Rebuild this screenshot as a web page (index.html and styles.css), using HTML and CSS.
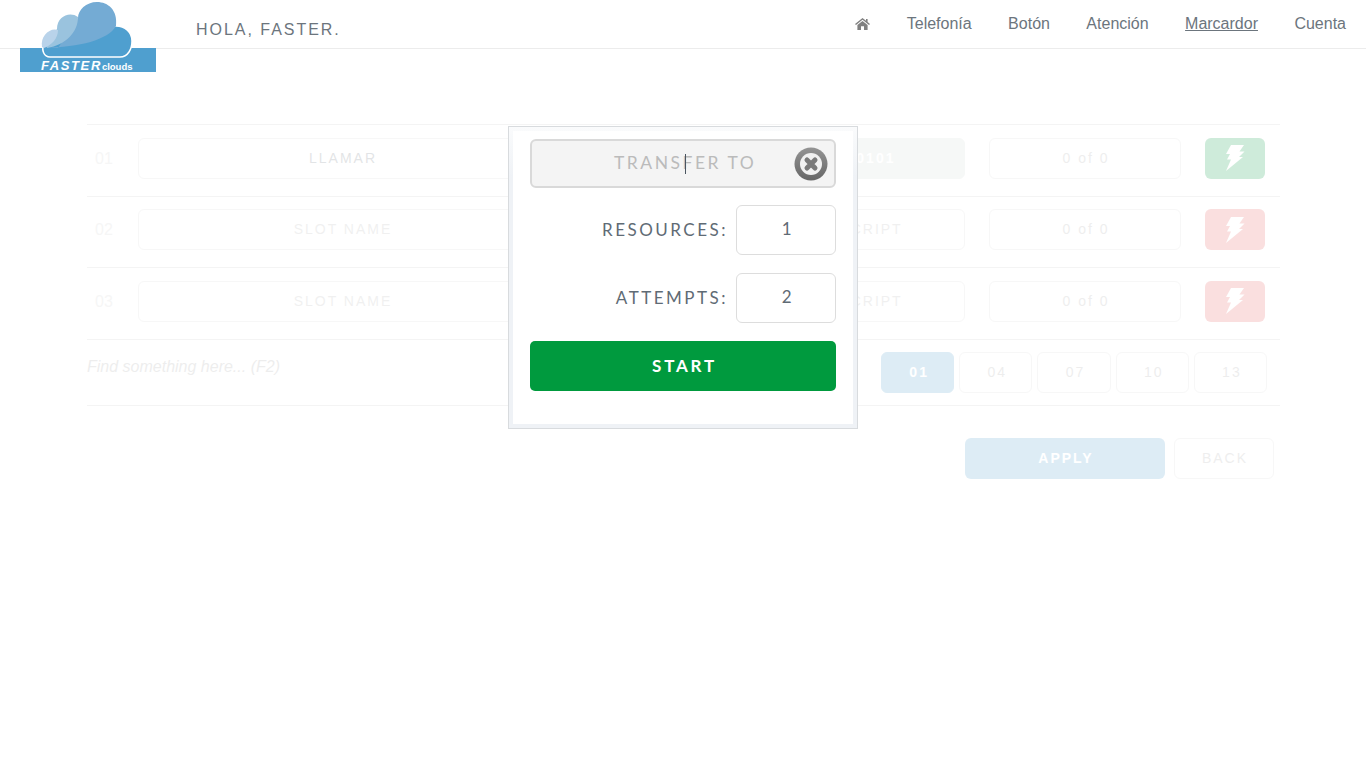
FILE: index.html
```html
<!DOCTYPE html>
<html lang="en">

<head>
    <meta charset="UTF-8">
    <meta name="viewport" content="width=device-width, initial-scale=1.0">
    <title>Faster Clouds</title>
    <link rel="stylesheet" href="styles.css">
</head>

<body>
    <header class="topbar">
        <svg class="logo" width="136" height="72" viewBox="0 0 136 72">
            <rect x="0" y="48" width="136" height="24" fill="#4f9fcf" />
            <path d="M30 57 H100 C108 57 112 49 112 41 C112 32 105 26 96 26 L60 24 L24 44 C21 50 24 57 30 57 Z" fill="#4f9fcf" stroke="#fff" stroke-width="1.5" />
            <path d="M24 48 C60 47 88 40 96 26 C98 10 88 2 77 2 C66 2 58 10 58 18 L38 48 Z" fill="#74abd4" />
            <path d="M27 48 C46 45 58 32 58 17 C50 11 37 16 37 29 L26 44 Z" fill="#9ac3de" />
            <path d="M22 47 C20 36 30 27 38 30 C38 38 32 45 24 48 Z" fill="#b9d3ea" />
            <text x="21" y="70" class="logo-name">FASTER<tspan class="logo-sub">clouds</tspan></text>
        </svg>
        <div class="greeting">HOLA, FASTER.</div>
        <nav class="nav">
            <a class="nav-item nav-home" href="#">
                <svg width="15" height="12" viewBox="0 0 15 13" preserveAspectRatio="none">
                    <path d="M7.5 0 L11 3 V1 H12.6 V4.4 L15 6.6 L14 7.6 L7.5 2 L1 7.6 L0 6.6 Z M2.4 7.6 L7.5 3.3 L12.6 7.6 V13 H9 V9 H6 V13 H2.4 Z" fill="#808080" />
                </svg>
            </a>
            <a class="nav-item" href="#">Telefonía</a>
            <a class="nav-item" href="#">Botón</a>
            <a class="nav-item" href="#">Atención</a>
            <a class="nav-item nav-active" href="#">Marcardor</a>
            <a class="nav-item" href="#">Cuenta</a>
        </nav>
    </header>

    <main class="dialer">
        <div class="slot-row">
            <span class="slot-num">01</span>
            <div class="field field-name field-filled">LLAMAR</div>
            <div class="field field-mid"></div>
            <div class="field field-script field-set">00101</div>
            <div class="field field-count">0 of 0</div>
            <div class="bolt-btn bolt-on">
                <svg width="20" height="26" viewBox="0 0 20 26"><path d="M6 0 H19 L14.5 6.5 H19.5 L14 12 H18 L1 26 L6 14.5 H2 L5 9 H1 Z" fill="#fff" /></svg>
            </div>
        </div>
        <div class="slot-row">
            <span class="slot-num">02</span>
            <div class="field field-name">SLOT NAME</div>
            <div class="field field-mid"></div>
            <div class="field field-script">SCRIPT</div>
            <div class="field field-count">0 of 0</div>
            <div class="bolt-btn bolt-off">
                <svg width="20" height="26" viewBox="0 0 20 26"><path d="M6 0 H19 L14.5 6.5 H19.5 L14 12 H18 L1 26 L6 14.5 H2 L5 9 H1 Z" fill="#fff" /></svg>
            </div>
        </div>
        <div class="slot-row">
            <span class="slot-num">03</span>
            <div class="field field-name">SLOT NAME</div>
            <div class="field field-mid"></div>
            <div class="field field-script">SCRIPT</div>
            <div class="field field-count">0 of 0</div>
            <div class="bolt-btn bolt-off">
                <svg width="20" height="26" viewBox="0 0 20 26"><path d="M6 0 H19 L14.5 6.5 H19.5 L14 12 H18 L1 26 L6 14.5 H2 L5 9 H1 Z" fill="#fff" /></svg>
            </div>
        </div>
        <div class="find-row">
            <span class="find-text">Find something here... (F2)</span>
            <div class="pages">
                <span class="page page-active">01</span>
                <span class="page">04</span>
                <span class="page">07</span>
                <span class="page">10</span>
                <span class="page">13</span>
            </div>
        </div>
        <div class="actions">
            <button class="btn-apply">APPLY</button>
            <button class="btn-back">BACK</button>
        </div>
    </main>

    <div class="modal">
        <div class="modal-inner">
            <div class="transfer">
                <span class="transfer-text">TRANSFER TO</span>
                <span class="caret"></span>
                <svg class="transfer-close" width="34" height="34" viewBox="0 0 34 34">
                    <defs>
                        <linearGradient id="ring" x1="0" y1="0" x2="0" y2="1">
                            <stop offset="0" stop-color="#949494" />
                            <stop offset="1" stop-color="#666" />
                        </linearGradient>
                    </defs>
                    <circle cx="17" cy="17" r="16.5" fill="url(#ring)" />
                    <circle cx="17" cy="17" r="11" fill="#f1f1f1" />
                    <path d="M13 13 L21 21 M21 13 L13 21" stroke="#7a7a7a" stroke-width="5" stroke-linecap="round" />
                </svg>
            </div>
            <div class="modal-row">
                <span class="modal-label">RESOURCES:</span>
                <div class="modal-value">1</div>
            </div>
            <div class="modal-row">
                <span class="modal-label">ATTEMPTS:</span>
                <div class="modal-value">2</div>
            </div>
            <button class="btn-start">START</button>
        </div>
    </div>
</body>

</html>
```

FILE: styles.css
```css
* {
    box-sizing: border-box;
}

body {
    margin: 0;
    background: #fff;
    font-family: "Liberation Sans", Arial, sans-serif;
    color: #6c757d;
    overflow: hidden;
}

/* top bar */
.topbar {
    display: flex;
    height: 49px;
    padding: 0 20px;
    border-bottom: 1px solid #ececec;
}

.logo {
    flex: none;
    margin-right: 40px;
}

.logo-name {
    font-family: "Liberation Sans", Arial, sans-serif;
    font-size: 13px;
    font-weight: bold;
    font-style: italic;
    letter-spacing: 1.6px;
    fill: #fff;
}

.logo-sub {
    font-size: 9.5px;
    font-style: normal;
    letter-spacing: 0;
}

.greeting {
    padding-top: 21px;
    font-size: 16px;
    line-height: 18px;
    letter-spacing: 1.97px;
}

.nav {
    display: flex;
    align-items: flex-start;
    gap: 36.45px;
    margin-left: auto;
    padding-top: 15px;
}

.nav-item {
    font-size: 16px;
    line-height: 18px;
    color: #6c757d;
    text-decoration: none;
}

.nav-home {
    padding-top: 1px;
}

.nav-active {
    text-decoration: underline;
}

/* dimmed page behind the dialog */
.dialer {
    width: 1193px;
    margin: 75px 0 0 87px;
    opacity: 0.19;
    font-size: 14px;
}

.slot-row {
    display: flex;
    height: 71.67px;
    padding-top: 12.67px;
    border-top: 1px solid #c8c8c8;
}

.slot-num {
    width: 51px;
    padding-left: 8px;
    font-size: 16px;
    line-height: 41px;
    color: #d0d0d0;
}

.field {
    height: 41px;
    padding-left: 2px;
    border: 1px solid #d8d8d8;
    border-radius: 6px;
    line-height: 39px;
    text-align: center;
    letter-spacing: 2px;
    color: #b5b5b5;
}

.field-name {
    width: 408px;
}

.field-filled {
    color: #6c757d;
}

.field-mid {
    width: 205px;
    margin-left: 24px;
}

.field-script {
    width: 190px;
    margin-right: 24px;
}

.field-set {
    border-color: #d3dcd7;
    background: #d3dcd7;
    color: #fff;
    font-weight: bold;
}

.field-count {
    width: 192px;
    margin-right: 24px;
    color: #a8a8a8;
}

.bolt-btn {
    display: flex;
    align-items: center;
    justify-content: center;
    width: 60px;
    height: 41px;
    border-radius: 6px;
}

.bolt-on {
    background: #009a3e;
}

.bolt-off {
    background: #e85a5a;
}

.find-row {
    display: flex;
    justify-content: space-between;
    height: 67px;
    padding-top: 12px;
    border-top: 1px solid #c8c8c8;
    border-bottom: 1px solid #c8c8c8;
}

.find-text {
    font-size: 16px;
    font-style: italic;
    line-height: 30px;
    color: #a5a5a5;
}

.pages {
    display: flex;
    gap: 5px;
    margin-right: 13px;
}

.page {
    width: 73.2px;
    height: 41px;
    padding-left: 3px;
    border: 1px solid #d8d8d8;
    border-radius: 6px;
    line-height: 39px;
    text-align: center;
    letter-spacing: 2px;
    color: #a5a5a5;
}

.page-active {
    border-color: #4f9fcf;
    background: #4f9fcf;
    color: #fff;
    font-weight: bold;
}

.actions {
    display: flex;
    justify-content: flex-end;
    gap: 9px;
    margin-top: 32px;
    margin-right: 6px;
}

.btn-apply,
.btn-back {
    height: 41px;
    padding: 0 0 0 2px;
    border-radius: 6px;
    font-family: "Liberation Sans", Arial, sans-serif;
    font-size: 14px;
    letter-spacing: 2px;
}

.btn-apply {
    width: 200px;
    border: none;
    background: #4f9fcf;
    color: #fff;
    font-weight: bold;
}

.btn-back {
    width: 100px;
    border: 1px solid #d8d8d8;
    background: #fff;
    color: #a8a8a8;
}

/* transfer dialog */
.modal {
    position: absolute;
    top: 126px;
    left: 508px;
    width: 350px;
    height: 303px;
    padding: 4px;
    border: 1px solid #d8dbde;
    background: linear-gradient(#fafbfc, #eff2f6 50px);
    font-family: Lato, "Open Sans", sans-serif;
    font-size: 17px;
    letter-spacing: 2.5px;
}

.modal-inner {
    height: 100%;
    padding: 8px 17px 0;
    background: #fff;
}

.transfer {
    position: relative;
    height: 49px;
    margin-bottom: 17px;
    padding-left: 82px;
    border: 2px solid #d9d9d9;
    border-radius: 6px;
    background: #f4f4f4;
    font-size: 17.5px;
    line-height: 43px;
    letter-spacing: 2.5px;
    color: #bbb;
}

.caret {
    position: absolute;
    top: 13px;
    left: 153px;
    width: 1px;
    height: 20px;
    background: #4a5560;
}

.transfer-close {
    position: absolute;
    top: 6px;
    right: 6px;
}

.modal-row {
    display: flex;
    align-items: center;
    justify-content: flex-end;
    gap: 8px;
    margin-bottom: 18px;
    color: #5f6b75;
}

.modal-label {
    margin-bottom: 2px;
}

.modal-value {
    width: 100px;
    height: 50px;
    padding-left: 4px;
    border: 1px solid #ddd;
    border-radius: 6px;
    line-height: 46px;
    text-align: center;
}

.btn-start {
    display: block;
    width: 100%;
    height: 50px;
    padding: 0 0 2px 3px;
    border: none;
    border-radius: 5px;
    background: #009a3e;
    color: #fff;
    font-family: Lato, "Open Sans", sans-serif;
    font-size: 17px;
    font-weight: bold;
    letter-spacing: 2.8px;
}
```
